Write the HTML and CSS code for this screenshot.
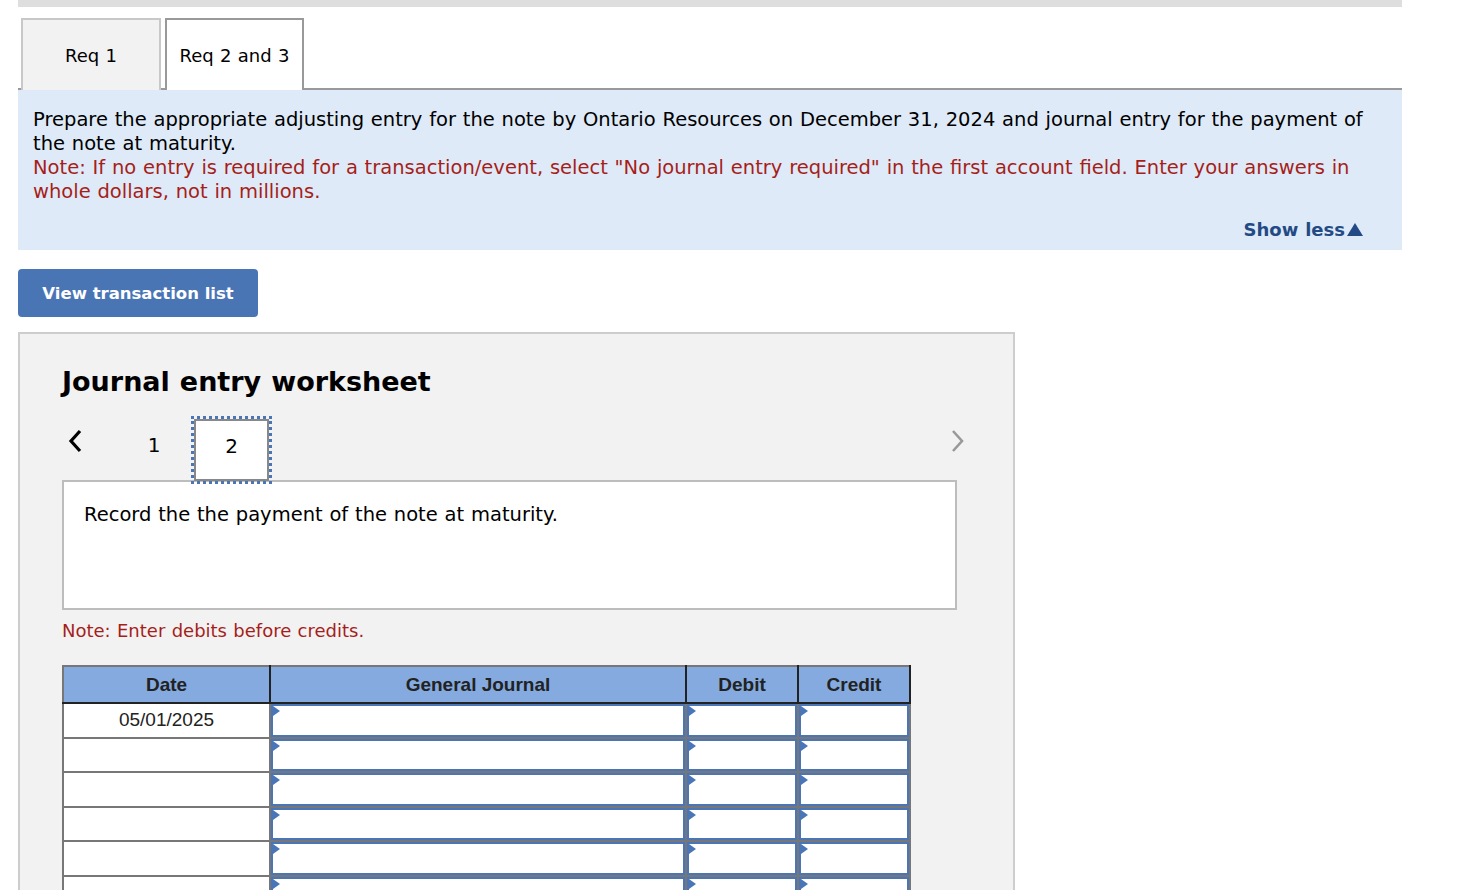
FILE: index.html
```html
<!DOCTYPE html>
<html lang="en">

<head>
    <meta charset="UTF-8">
    <meta name="viewport" content="width=device-width, initial-scale=1.0">
    <title>Journal entry worksheet</title>
    <link rel="stylesheet" href="styles.css">
</head>

<body>
    <div class="page">
        <div class="top-bar"></div>

        <div class="tabs">
            <div class="tab">Req 1</div>
            <div class="tab active">Req 2 and 3</div>
        </div>

        <div class="instructions">
            <p>Prepare the appropriate adjusting entry for the note by Ontario Resources on December 31, 2024 and journal entry for the payment of the note at maturity.</p>
            <p class="warn">Note: If no entry is required for a transaction/event, select "No journal entry required" in the first account field. Enter your answers in whole dollars, not in millions.</p>
            <div class="show-less">Show less<svg class="arrow" width="16" height="13" viewBox="0 0 16 13"><polygon points="8,0 16,13 0,13" fill="#234a85"/></svg></div>
        </div>

        <button class="btn-list">View transaction list</button>

        <div class="worksheet">
            <h2>Journal entry worksheet</h2>

            <div class="pager">
                <span class="chev">
                    <svg width="16" height="24" viewBox="0 0 16 24"><polyline points="13,2 4,12 13,22" fill="none" stroke="#000" stroke-width="3.2"/></svg>
                </span>
                <span class="page-no">1</span>
                <span class="page-no current">2</span>
                <span class="chev next">
                    <svg width="16" height="24" viewBox="0 0 16 24"><polyline points="3,2 12,12 3,22" fill="none" stroke="#999" stroke-width="2.6"/></svg>
                </span>
            </div>

            <div class="desc">Record the the payment of the note at maturity.</div>

            <p class="note">Note: Enter debits before credits.</p>

            <table class="journal">
                <thead>
                    <tr>
                        <th class="c-date">Date</th>
                        <th class="c-acct">General Journal</th>
                        <th class="c-num">Debit</th>
                        <th class="c-num">Credit</th>
                    </tr>
                </thead>
                <tbody>
                    <tr>
                        <td class="date">05/01/2025</td>
                        <td><div class="field"></div></td>
                        <td><div class="field"></div></td>
                        <td><div class="field"></div></td>
                    </tr>
                    <tr>
                        <td class="date"></td>
                        <td><div class="field"></div></td>
                        <td><div class="field"></div></td>
                        <td><div class="field"></div></td>
                    </tr>
                    <tr>
                        <td class="date"></td>
                        <td><div class="field"></div></td>
                        <td><div class="field"></div></td>
                        <td><div class="field"></div></td>
                    </tr>
                    <tr>
                        <td class="date"></td>
                        <td><div class="field"></div></td>
                        <td><div class="field"></div></td>
                        <td><div class="field"></div></td>
                    </tr>
                    <tr>
                        <td class="date"></td>
                        <td><div class="field"></div></td>
                        <td><div class="field"></div></td>
                        <td><div class="field"></div></td>
                    </tr>
                    <tr>
                        <td class="date"></td>
                        <td><div class="field"></div></td>
                        <td><div class="field"></div></td>
                        <td><div class="field"></div></td>
                    </tr>
                    <tr>
                        <td class="date"></td>
                        <td><div class="field"></div></td>
                        <td><div class="field"></div></td>
                        <td><div class="field"></div></td>
                    </tr>
                </tbody>
            </table>
        </div>
    </div>
</body>

</html>
```

FILE: styles.css
```css
body {
    margin: 0;
    background: #fff;
    font-family: "DejaVu Sans", Verdana, sans-serif;
    font-size: 18px;
    word-spacing: 0.6px;
    color: #000;
}

.page {
    width: 1384px;
    margin-left: 18px;
}

.top-bar {
    height: 7px;
    background: #dedede;
}

/* tabs */
.tabs {
    display: flex;
    gap: 4px;
    margin-top: 11px;
    padding-left: 3px;
    border-bottom: 2px solid #999;
    height: 70px;
}

.tab {
    width: 136px;
    height: 70px;
    border: 2px solid #c8c8c8;
    border-bottom: none;
    background: #f2f2f2;
    display: flex;
    align-items: center;
    justify-content: center;
}

.tab.active {
    width: 135px;
    background: #fff;
    border-color: #999;
}

/* instructions panel */
.instructions {
    background: #deeaf7;
    padding: 18px 15px 8px 15px;
    font-size: 19.5px;
    line-height: 24px;
}

.instructions p {
    margin: 0;
}

.instructions .warn {
    color: #a61e1a;
}

.show-less {
    display: flex;
    justify-content: flex-end;
    align-items: center;
    margin-top: 14px;
    margin-right: 24px;
    font-size: 18px;
    font-weight: bold;
    color: #234a85;
}

.show-less .arrow {
    margin-left: 2px;
    margin-top: -1px;
}

/* button */
.btn-list {
    display: block;
    margin-top: 19px;
    width: 240px;
    height: 48px;
    border: none;
    border-radius: 4px;
    background: #4a75b5;
    color: #fff;
    font-family: "DejaVu Sans", Verdana, sans-serif;
    font-weight: bold;
    font-size: 16.5px;
    padding: 0;
    text-align: center;
}

/* worksheet */
.worksheet {
    margin-top: 15px;
    width: 997px;
    height: 600px;
    background: #f2f2f2;
    border: 2px solid #cdcdcd;
    padding: 0 0 0 42px;
    box-sizing: border-box;
}

.worksheet h2 {
    margin: 31px 0 0 0;
    font-size: 27px;
    line-height: 34px;
    font-weight: bold;
}

.pager {
    display: flex;
    align-items: flex-start;
    width: 895px;
    margin-top: 20px;
    height: 61px;
}

.chev {
    display: flex;
    margin-left: 5px;
    margin-top: 10px;
}

.chev.next {
    margin-left: auto;
    margin-right: -9px;
}

.page-no {
    width: 80px;
    margin-left: 31px;
    margin-top: 14px;
    text-align: center;
    font-size: 20px;
    line-height: 24px;
}

.page-no.current {
    width: 75px;
    height: 62px;
    margin: 0;
    box-sizing: border-box;
    border: 2px solid #888;
    background: #fff;
    outline: 3px dotted #4a76b8;
    display: flex;
    align-items: center;
    justify-content: center;
    padding-bottom: 9px;
    position: relative;
    z-index: 1;
}

.desc {
    width: 895px;
    height: 130px;
    box-sizing: border-box;
    background: #fff;
    border: 2px solid #bdbdbd;
    padding: 21px 20px;
    font-size: 19.5px;
    line-height: 24px;
}

.note {
    margin: 9px 0 0 0;
    line-height: 24px;
    color: #a61e1a;
}

/* journal table */
.journal {
    margin-top: 22px;
    border-collapse: collapse;
    font-family: "Liberation Sans", Arial, sans-serif;
    font-size: 19px;
    word-spacing: 0;
    background: #fff;
}

.journal th {
    background: #84aadf;
    color: #222;
    font-weight: bold;
    height: 35px;
    padding: 0;
    border: 2px solid #222;
    border-top-color: #777;
}

.journal th:first-child {
    border-left-color: #777;
}

.c-date {
    width: 205px;
}

.c-acct {
    width: 414px;
}

.c-num {
    width: 110px;
}

.journal td {
    border: 2px solid #777;
    padding: 0;
    height: 32.5px;
}

.journal td.date {
    text-align: center;
    color: #222;
}

.field {
    position: relative;
    height: 32.5px;
    border: 2px solid #4a76b8;
    box-sizing: border-box;
}

/* little blue flag at the top left of every input */
.field::before {
    content: "";
    position: absolute;
    left: 0;
    top: 0;
    border-left: 7px solid #4a76b8;
    border-top: 5px solid transparent;
    border-bottom: 5px solid transparent;
}
```
